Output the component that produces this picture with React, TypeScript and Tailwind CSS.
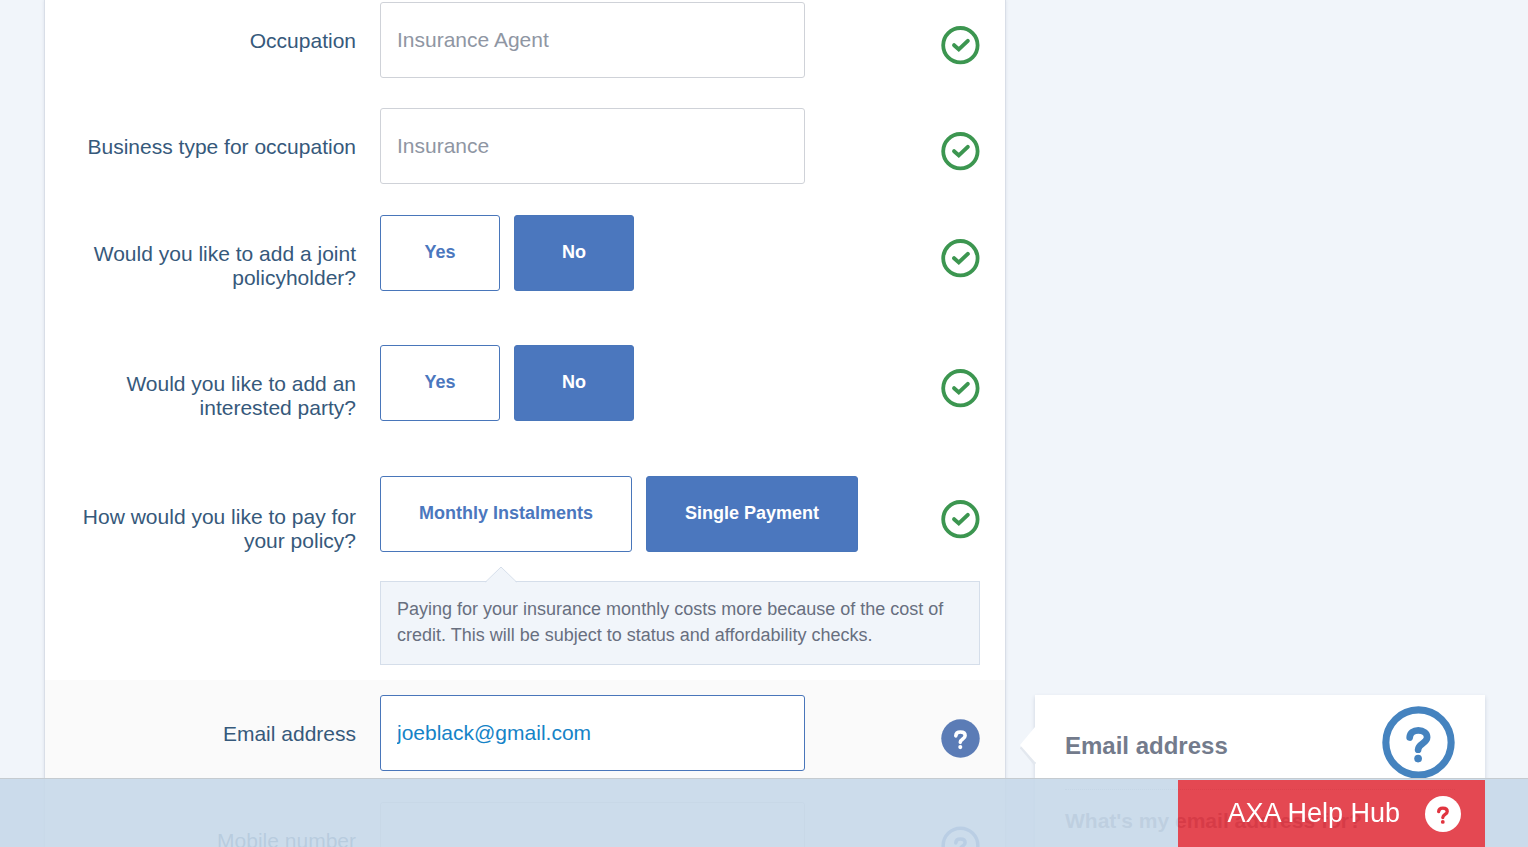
import type { ReactNode } from "react";

function CheckIcon() {
  return (
    <svg viewBox="0 0 39 39" className="size-[39px]" fill="none" stroke="#3c9650" role="img" aria-label="Complete">
      <circle cx="19.4" cy="19.2" r="17.2" strokeWidth="3.8" />
      <path d="M13.1 19.2 L17.8 23.4 L26.8 14.9" strokeWidth="4" strokeLinecap="round" strokeLinejoin="miter" />
    </svg>
  );
}

function QuestionMark() {
  return (
    <>
      <path
        d="M31.3 34.6 C31.6 30 35 27.6 39.8 27.6 C45 27.6 48.5 30.2 48.5 34.4 C48.5 40.4 39.6 40.4 39.6 46.6"
        fill="none"
        strokeWidth="6.6"
        strokeLinecap="round"
      />
      <circle cx="39.6" cy="55.4" r="3.8" stroke="none" />
    </>
  );
}

function SmallHelp({ filled }: { filled?: boolean }) {
  return filled ? (
    <svg viewBox="4 3.5 72 72" className="size-[39px]" aria-hidden="true">
      <circle cx="40" cy="39.5" r="35.5" fill="#5b7cb6" />
      <g fill="#fff" stroke="#fff">
        <QuestionMark />
      </g>
    </svg>
  ) : (
    <svg viewBox="4 3.5 72 72" className="size-[39px]" aria-hidden="true">
      <circle cx="40" cy="39.5" r="32" fill="none" stroke="#4976ba" strokeWidth="6.5" />
      <g fill="#4976ba" stroke="#4976ba">
        <QuestionMark />
      </g>
    </svg>
  );
}

function Row({ label, htmlFor, icon, children, className, labelClass = "pt-[27px]" }: {
  label: string;
  htmlFor?: string;
  icon: ReactNode;
  children: ReactNode;
  className: string;
  labelClass?: string;
}) {
  const text = "w-[281px] shrink-0 text-right text-[21px] leading-6 text-[#36597b] " + labelClass;
  return (
    <div className={"flex pr-[25px] pl-[30px] " + className}>
      {htmlFor ? <label htmlFor={htmlFor} className={text}>{label}</label> : <span className={text}>{label}</span>}
      <div className="ml-6 flex min-w-0 flex-1">{children}</div>
      <div className="shrink-0 pt-6">{icon}</div>
    </div>
  );
}

const field = "h-[76px] w-[425px] rounded-[3px] border px-4 text-[21px] outline-none ";

function Choices({ name, options, selected }: { name: string; options: string[]; selected: string }) {
  return (
    <div role="group" aria-label={name} className="flex gap-[14px]">
      {options.map((o) => (
        <button
          key={o}
          type="button"
          aria-pressed={o === selected}
          className={
            "h-[76px] min-w-[120px] rounded-[3px] border border-[#4976ba] px-[38px] pb-0.5 text-lg font-bold whitespace-nowrap " +
            (o === selected ? "bg-[#4b77be] text-white" : "bg-white text-[#4b77be]")
          }
        >
          {o}
        </button>
      ))}
    </div>
  );
}

export default function App() {
  return (
    <div className="h-screen overflow-hidden bg-[#f1f5fa] font-['Liberation_Sans',Arial,sans-serif]">
      <form className="mr-[522px] ml-11 border-x border-[#d9dee7] bg-white shadow-[0_0_3px_rgba(60,80,120,0.12)]">
        <Row label="Occupation" htmlFor="occupation" icon={<CheckIcon />} className="pt-0.5 pb-[15px]">
          <input id="occupation" defaultValue="Insurance Agent" className={field + "border-[#cfd2d8] bg-white text-[#8f96a3]"} />
        </Row>
        <Row label="Business type for occupation" htmlFor="business" icon={<CheckIcon />} className="pt-[15px] pb-4">
          <input id="business" defaultValue="Insurance" className={field + "border-[#cfd2d8] bg-white text-[#8f96a3]"} />
        </Row>
        <Row label="Would you like to add a joint policyholder?" icon={<CheckIcon />} className="pt-[15px] pb-[39px]">
          <Choices name="Joint policyholder" options={["Yes", "No"]} selected="No" />
        </Row>
        <Row label="Would you like to add an interested party?" icon={<CheckIcon />} className="pt-[15px] pb-[39px]">
          <Choices name="Interested party" options={["Yes", "No"]} selected="No" />
        </Row>
        <Row label="How would you like to pay for your policy?" icon={<CheckIcon />} className="pt-4" labelClass="pt-[29px]">
          <Choices name="Payment" options={["Monthly Instalments", "Single Payment"]} selected="Single Payment" />
        </Row>
        <div className="pt-7 pr-[25px] pb-[15px] pl-[335px]">
          <div className="relative border border-[#d5deea] bg-[#f1f5fa] px-4 pt-[14px] pb-4">
            <svg viewBox="0 0 32 17" className="absolute -top-4 left-[104px] h-[17px] w-8" aria-hidden="true">
              <path d="M0 17 L16 1 L32 17 Z" fill="#f1f5fa" />
              <path d="M0.5 16 L16 1 L31.5 16" fill="none" stroke="#d5deea" />
            </svg>
            <p className="text-lg leading-[26px] text-[#686f7f]">
              Paying for your insurance monthly costs more because of the cost of credit. This will be subject to status and affordability checks.
            </p>
          </div>
        </div>
        <div className="relative bg-[#fafafa]">
          <Row label="Email address" htmlFor="email" icon={<SmallHelp filled />} className="pt-[15px] pb-4">
            <input id="email" type="email" defaultValue="joeblack@gmail.com" className={field + "border-[#4976ba] bg-white text-[#1583c7]"} />
          </Row>
          <aside className="absolute top-[15px] left-full ml-[30px] w-[450px] bg-white px-[30px] pb-12 shadow-[0_2px_4px_rgba(60,80,120,0.2)]">
            <svg viewBox="0 0 16 38" className="absolute top-8 -left-[15px] h-[38px] w-4" aria-hidden="true">
              <path d="M1 20 L15 37" stroke="#e3e8ef" strokeWidth="3" />
              <path d="M0 18 L15 0 H16 V35 H15 Z" fill="#fff" />
            </svg>
            <div className="flex h-[95px] items-center justify-between border-b border-dotted border-[#b8c0cc]">
              <h2 className="pt-2 text-2xl font-bold text-[#737b8c]">Email address</h2>
              <svg viewBox="4 3.5 72 72" className="size-[73px]" aria-hidden="true">
                <circle cx="40" cy="39.5" r="32.2" fill="none" stroke="#4583bf" strokeWidth="7" />
                <g fill="#4583bf" stroke="#4583bf">
                  <QuestionMark />
                </g>
              </svg>
            </div>
            <h3 className="pt-[19px] text-[21px] leading-6 font-bold text-[#737b8c]">What's my email address for?</h3>
          </aside>
        </div>
        <Row label="Mobile number" htmlFor="mobile" icon={<SmallHelp />} className="pt-[15px] pb-4">
          <input id="mobile" type="tel" className={field + "border-[#cfd2d8] bg-white text-[#8f96a3]"} />
        </Row>
      </form>

      <footer className="fixed inset-x-0 bottom-0 flex h-[69px] border-t border-[#c5cbd0]">
        <div className="flex-1 bg-[#c6d8e9]/90" />
        <div className="flex w-[307px] flex-col">
          <div className="h-px bg-[#c6d8e9]/90" />
          <button type="button" className="flex flex-1 items-center justify-end gap-[25px] bg-[#e1343f]/90 pr-6 text-[27px] text-white">
            AXA Help Hub
            <svg viewBox="4 3.5 72 72" className="size-9" aria-hidden="true">
              <circle cx="40" cy="39.5" r="36" fill="#fff" />
              <g fill="#e1343f" stroke="#e1343f">
                <QuestionMark />
              </g>
            </svg>
          </button>
        </div>
        <div className="w-[43px] bg-[#c6d8e9]/90" />
      </footer>
    </div>
  );
}
